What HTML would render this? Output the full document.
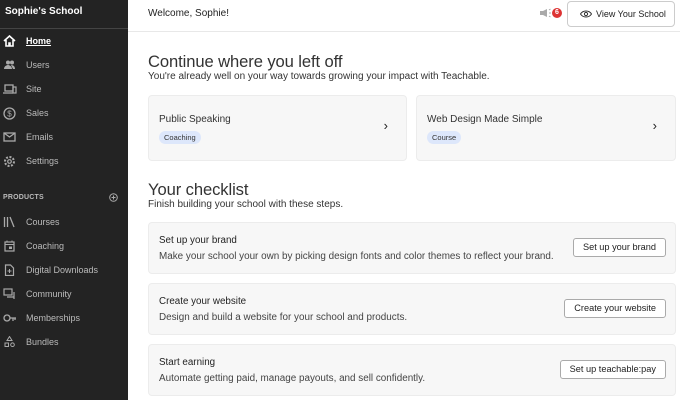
<!DOCTYPE html>
<html><head><meta charset="utf-8"><style>
*{box-sizing:border-box;margin:0;padding:0}
body{width:680px;height:400px;overflow:hidden;font-family:"Liberation Sans",sans-serif;background:#fff;position:relative;color:#222}
.sb{position:absolute;left:0;top:0;width:128px;height:400px;background:#232323;color:#bbb}
.sb .t{position:absolute;left:5px;top:6px;color:#fff;font-weight:bold;font-size:10px}
.sb .hr{position:absolute;left:0;top:28px;width:128px;border-top:1px solid #444}
.ni{position:absolute;left:0;height:16px;width:128px;font-size:9px;line-height:16px}
.ni span{position:absolute;left:26px}
.ni svg{position:absolute;left:3px;top:2px}
.ni.on span{color:#fff;font-weight:bold;text-decoration:underline}
.prod{position:absolute;left:3px;top:194px;font-size:7px;font-weight:bold;color:#bbb;letter-spacing:.2px}
.main{position:absolute;left:128px;top:0;right:0;height:400px}
.top{position:absolute;left:0;right:0;top:0;height:32px;border-bottom:1px solid #e8e8e8}
.top .w{position:absolute;left:20px;top:8px;font-size:10px;color:#222}
.vb{position:absolute;left:439px;top:1px;width:108px;height:26px;border:1px solid #ccc;border-radius:4px;font-size:9px;line-height:24px;padding-left:28px;color:#222}
.badge{position:absolute;left:424px;top:8px;width:10px;height:10px;border-radius:5px;background:#d33;color:#fff;font-size:7px;text-align:center;line-height:10px;font-weight:bold}
h2{position:absolute;left:20px;font-size:16.6px;font-weight:normal;color:#333;letter-spacing:-.1px}
.sub{position:absolute;left:20px;font-size:10px;color:#333}
.card{position:absolute;background:#f7f7f7;border:1px solid #ececec;border-radius:4px}
.card .n{position:absolute;left:10px;top:18px;font-size:10px;color:#333}
.tag{position:absolute;left:10px;top:35px;background:#dde7fb;border-radius:7px;font-size:7.5px;padding:0 5px;height:13px;line-height:13px;color:#333}
.arr{position:absolute;right:18px;top:22px;font-size:13px;color:#222}
.ck .h{position:absolute;left:10px;top:12px;font-size:9.8px;color:#222}
.ck .d{position:absolute;left:10px;top:28px;font-size:9.9px;color:#444}
.btn{position:absolute;right:9px;top:15px;height:19px;border:1px solid #aaa;border-radius:3px;background:#fff;font-size:9.2px;line-height:17px;padding:0 9px;color:#222}
</style></head><body>
<div class="sb">
<div class="t">Sophie's School</div><div class="hr"></div>
<div class="ni on" style="top:33px"><svg width="13" height="12" viewBox="0 0 13 12"><path d="M1 6L6.5 1L12 6M3 5v6h3V8h1v3h3V5" fill="none" stroke="#fff" stroke-width="1.6"/></svg><span>Home</span></div>
<div class="ni" style="top:57px"><svg width="13" height="12"><circle cx="5" cy="3.5" r="2" fill="#aaa"/><circle cx="9" cy="3.5" r="2" fill="#aaa"/><path d="M1 10c0-3 3-4 4-4s4 1 4 4zM8 6c2 0 4 1 4 4H10" fill="#aaa"/></svg><span>Users</span></div>
<div class="ni" style="top:81px"><svg width="14" height="12"><rect x="2" y="2" width="8" height="6" fill="none" stroke="#aaa" stroke-width="1.3"/><path d="M0 10h10" stroke="#aaa" stroke-width="1.3"/><rect x="10" y="4" width="3" height="6" fill="none" stroke="#aaa" stroke-width="1.2"/></svg><span>Site</span></div>
<div class="ni" style="top:105px"><svg width="13" height="13"><circle cx="6.5" cy="6.5" r="5.5" fill="none" stroke="#aaa" stroke-width="1.3"/><text x="6.5" y="9.5" font-size="8" text-anchor="middle" fill="#aaa" font-family="Liberation Sans">$</text></svg><span>Sales</span></div>
<div class="ni" style="top:129px"><svg width="13" height="12"><rect x="1" y="2" width="11" height="8" fill="none" stroke="#aaa" stroke-width="1.3"/><path d="M1 2l5.5 4L12 2" fill="none" stroke="#aaa" stroke-width="1.2"/></svg><span>Emails</span></div>
<div class="ni" style="top:153px"><svg width="13" height="13"><circle cx="6.5" cy="6.5" r="4.5" fill="none" stroke="#aaa" stroke-width="2" stroke-dasharray="2 1.5"/><circle cx="6.5" cy="6.5" r="1.8" fill="none" stroke="#aaa" stroke-width="1.2"/></svg><span>Settings</span></div>
<div class="prod">PRODUCTS</div>
<svg style="position:absolute;left:109px;top:193px" width="9" height="9"><circle cx="4.5" cy="4.5" r="3.8" fill="none" stroke="#aaa"/><path d="M4.5 2.5v4M2.5 4.5h4" stroke="#aaa"/></svg>
<div class="ni" style="top:214px"><svg width="13" height="12"><path d="M1.5 1v10M4.5 1v10M7 1l4 10" stroke="#aaa" stroke-width="1.3"/></svg><span>Courses</span></div>
<div class="ni" style="top:238px"><svg width="13" height="12"><rect x="2" y="2" width="9" height="9" fill="none" stroke="#aaa" stroke-width="1.2"/><path d="M2 4.5h9M4 0.5v2M9 0.5v2" stroke="#aaa"/><rect x="6" y="6.5" width="3" height="2.5" fill="#aaa"/></svg><span>Coaching</span></div>
<div class="ni" style="top:262px"><svg width="13" height="12"><path d="M2.5 1h5l3 3v7.5h-8z" fill="none" stroke="#aaa" stroke-width="1.2"/><path d="M6.5 5v4M4.5 7h4" stroke="#aaa"/></svg><span>Digital Downloads</span></div>
<div class="ni" style="top:286px"><svg width="13" height="12"><rect x="1" y="1" width="8" height="6" fill="none" stroke="#aaa" stroke-width="1.2"/><path d="M4 9h7V4M11 9v2" fill="none" stroke="#aaa" stroke-width="1.2"/></svg><span>Community</span></div>
<div class="ni" style="top:310px"><svg width="14" height="12"><circle cx="4" cy="6" r="3" fill="none" stroke="#aaa" stroke-width="1.3"/><path d="M7 6h6M10 6v3M12 6v2" stroke="#aaa" stroke-width="1.3"/></svg><span>Memberships</span></div>
<div class="ni" style="top:334px"><svg width="13" height="12"><path d="M6.5 0.5L9 4.5H4z" fill="none" stroke="#aaa"/><rect x="2" y="7" width="3.5" height="3.5" fill="none" stroke="#aaa"/><circle cx="9.5" cy="8.7" r="1.8" fill="none" stroke="#aaa"/></svg><span>Bundles</span></div>
</div>
<div class="main">
<div class="top"><div class="w">Welcome, Sophie!</div>
<svg style="position:absolute;left:411px;top:8px" width="12" height="10"><path d="M1 3h3l4-2v8L4 7H1z" fill="#aaa"/><path d="M10 2l1.5-1M10 5h2M10 8l1.5 1" stroke="#aaa"/></svg>
<div class="badge">6</div>
<div class="vb"><svg style="position:absolute;left:12px;top:8px" width="12" height="8"><path d="M0.5 4C3 0 9 0 11.5 4C9 8 3 8 0.5 4z" fill="none" stroke="#333"/><circle cx="6" cy="4" r="1.6" fill="none" stroke="#333"/></svg>View Your School</div>
</div>
<h2 style="top:52px">Continue where you left off</h2>
<div class="sub" style="top:71px">You're already well on your way towards growing your impact with Teachable.</div>
<div class="card" style="left:20px;top:95px;width:259px;height:66px"><div class="n">Public Speaking</div><div class="tag">Coaching</div><div class="arr">›</div></div>
<div class="card" style="left:288px;top:95px;width:260px;height:66px"><div class="n">Web Design Made Simple</div><div class="tag">Course</div><div class="arr">›</div></div>
<h2 style="top:180px">Your checklist</h2>
<div class="sub" style="top:199px">Finish building your school with these steps.</div>
<div class="card ck" style="left:20px;top:222px;width:528px;height:52px"><div class="h">Set up your brand</div><div class="d">Make your school your own by picking design fonts and color themes to reflect your brand.</div><div class="btn">Set up your brand</div></div>
<div class="card ck" style="left:20px;top:283px;width:528px;height:52px"><div class="h">Create your website</div><div class="d">Design and build a website for your school and products.</div><div class="btn">Create your website</div></div>
<div class="card ck" style="left:20px;top:344px;width:528px;height:52px"><div class="h">Start earning</div><div class="d">Automate getting paid, manage payouts, and sell confidently.</div><div class="btn">Set up teachable:pay</div></div>
</div>
</body></html>
